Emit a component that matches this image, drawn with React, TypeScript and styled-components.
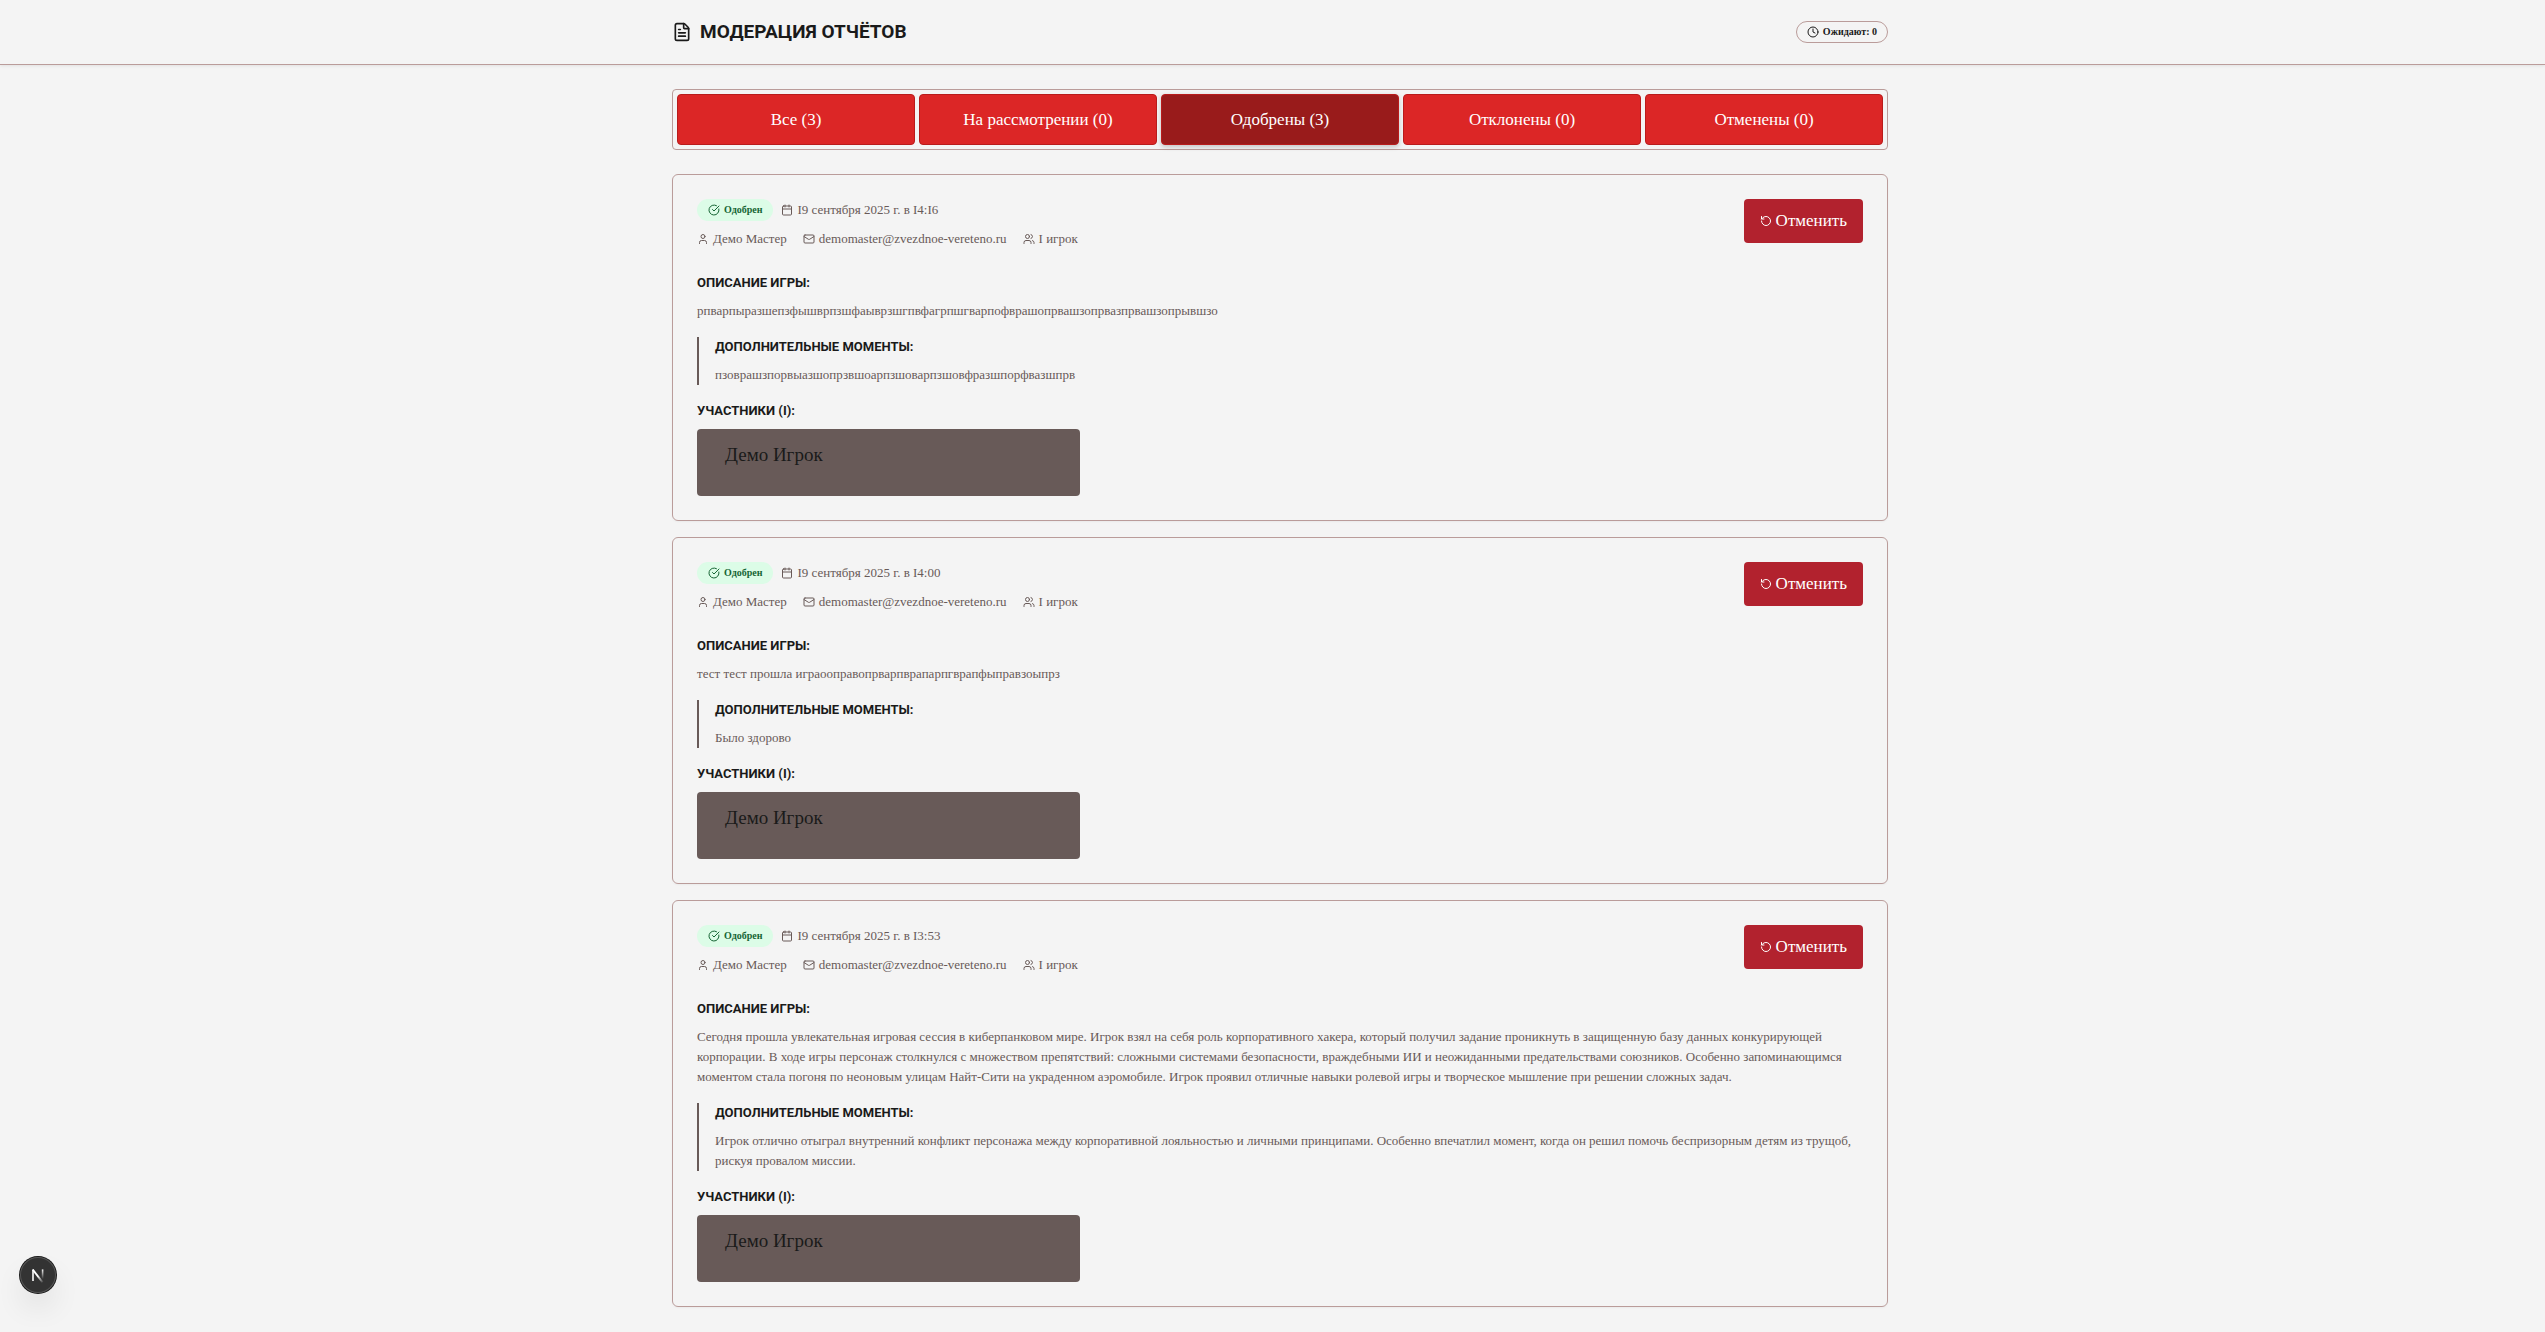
import React from "react";
import styled, { createGlobalStyle } from "styled-components";
import { Calendar, CircleCheckBig, Clock, FileText, Mail, RotateCcw, User, Users } from "lucide-react";

const color = {
  page: "#f4f4f4",
  ink: "#1a1a1a",
  muted: "#685a58",
  line: "#ba9c9a",
};

const bodyFont = `"Liberation Serif", "Times New Roman", serif`;
const displayFont = `Roboto, "Liberation Sans", sans-serif`;

const GlobalStyle = createGlobalStyle`
  *, *::before, *::after { box-sizing: border-box; }
  body {
    margin: 0;
    min-height: 100vh;
    background: ${color.page};
    color: ${color.ink};
    font-family: ${bodyFont};
    font-size: 13px;
    line-height: 20px;
  }
  h1, h2, h3, p, ul { margin: 0; padding: 0; }
  svg { flex: none; display: block; }
  button { font-family: inherit; cursor: pointer; }
`;

const Header = styled.header`
  padding-left: 15px;
  border-bottom: 1px solid ${color.line};
  box-shadow: 0 1px 3px rgba(0, 0, 0, 0.08);
`;

const Container = styled.div`
  max-width: 1280px;
  margin: 0 auto;
  padding: 0 32px;
`;

const HeaderRow = styled(Container)`
  display: flex;
  align-items: center;
  justify-content: space-between;
  height: 64px;
`;

const Title = styled.h1`
  display: flex;
  align-items: center;
  gap: 8px;
  font-family: ${displayFont};
  font-size: 19px;
  line-height: 32px;
  font-weight: 700;
`;

const Badge = styled.span<{ $tone: "outline" | "success" }>`
  display: inline-flex;
  align-items: center;
  gap: 4px;
  height: 22px;
  padding: 0 10px;
  border: 1px solid ${(p) => (p.$tone === "success" ? "transparent" : color.line)};
  border-radius: 11px;
  background: ${(p) => (p.$tone === "success" ? "#dcfce7" : "transparent")};
  color: ${(p) => (p.$tone === "success" ? "#166534" : color.ink)};
  font-size: 10px;
  line-height: 16px;
  font-weight: 700;
  white-space: nowrap;
`;

const Main = styled.main`
  padding: 24px 0 24px 15px;
`;

const Tabs = styled.div`
  display: grid;
  grid-template-columns: repeat(5, 1fr);
  gap: 4px;
  padding: 4px;
  margin-bottom: 24px;
  border: 1px solid ${color.line};
  border-radius: 4px;
`;

const Tab = styled.button<{ $active: boolean }>`
  padding: 12px 16px;
  border: 1px solid #b91c1c;
  border-radius: 4px;
  background: ${(p) => (p.$active ? "#991b1b" : "#dc2626")};
  box-shadow: ${(p) => (p.$active ? "0 2px 5px rgba(0, 0, 0, 0.2)" : "none")};
  color: #fff;
  font-size: 17px;
  line-height: 25px;
`;

const Reports = styled.div`
  display: flex;
  flex-direction: column;
  gap: 16px;
`;

const Card = styled.article`
  padding: 24px;
  border: 1px solid ${color.line};
  border-radius: 6px;
  box-shadow: 0 1px 2px rgba(0, 0, 0, 0.04);
`;

const CardHeader = styled.div`
  display: flex;
  align-items: flex-start;
  justify-content: space-between;
  margin-bottom: 24px;
`;

const MetaRows = styled.div`
  display: flex;
  flex-direction: column;
  gap: 8px;
  color: ${color.muted};
`;

const MetaRow = styled.div<{ $gap: number }>`
  display: flex;
  align-items: center;
  gap: ${(p) => p.$gap}px;
`;

const Meta = styled.span`
  display: flex;
  align-items: center;
  gap: 4px;
`;

const CancelButton = styled.button`
  display: flex;
  align-items: center;
  gap: 4px;
  height: 44px;
  padding: 0 16px;
  border: 0;
  border-radius: 4px;
  background: #b2222e;
  color: #fff;
  font-size: 17px;
  line-height: 28px;
`;

const Sections = styled.div`
  display: flex;
  flex-direction: column;
  gap: 16px;
`;

const Section = styled.section<{ $quoted?: boolean }>`
  display: flex;
  flex-direction: column;
  gap: 8px;
  padding-left: ${(p) => (p.$quoted ? 16 : 0)}px;
  border-left: ${(p) => (p.$quoted ? `2px solid ${color.muted}` : "0")};
`;

const SectionTitle = styled.h3`
  font-family: ${displayFont};
  font-size: 13px;
  line-height: 20px;
  font-weight: 700;
`;

const Text = styled.p`
  color: ${color.muted};
`;

const Players = styled.ul`
  display: grid;
  grid-template-columns: repeat(3, 1fr);
  gap: 8px;
  list-style: none;
`;

const Player = styled.li`
  padding: 12px 28px 27px;
  border-radius: 4px;
  background: ${color.muted};
  font-size: 19px;
  line-height: 28px;
`;

const DevButton = styled.button`
  position: fixed;
  left: 20px;
  bottom: 39px;
  width: 36px;
  height: 36px;
  padding: 0;
  border: 0;
  border-radius: 50%;
  background: #333;
  box-shadow: 0 0 0 1px #171717, inset 0 0 0 1px #555, 0 16px 32px -8px rgba(0, 0, 0, 0.24);
`;

const tabs = [
  { label: "Все (3)", active: false },
  { label: "На рассмотрении (0)", active: false },
  { label: "Одобрены (3)", active: true },
  { label: "Отклонены (0)", active: false },
  { label: "Отменены (0)", active: false },
];

const reports = [
  {
    date: "I9 сентября 2025 г. в I4:I6",
    description: "рпварпыразшепзфышврпзшфаыврзшгпвфагрпшгварпофврашопрвашзопрвазпрвашзопрывшзо",
    extra: "пзоврашзпорвыазшопрзвшоарпзшоварпзшовфразшпорфвазшпрв",
  },
  {
    date: "I9 сентября 2025 г. в I4:00",
    description: "тест тест прошла играооправопрварпврапарпгврапфыправзоыпрз",
    extra: "Было здорово",
  },
  {
    date: "I9 сентября 2025 г. в I3:53",
    description:
      "Сегодня прошла увлекательная игровая сессия в киберпанковом мире. Игрок взял на себя роль корпоративного хакера, который получил задание проникнуть в защищенную базу данных конкурирующей корпорации. В ходе игры персонаж столкнулся с множеством препятствий: сложными системами безопасности, враждебными ИИ и неожиданными предательствами союзников. Особенно запоминающимся моментом стала погоня по неоновым улицам Найт-Сити на украденном аэромобиле. Игрок проявил отличные навыки ролевой игры и творческое мышление при решении сложных задач.",
    extra:
      "Игрок отлично отыграл внутренний конфликт персонажа между корпоративной лояльностью и личными принципами. Особенно впечатлил момент, когда он решил помочь беспризорным детям из трущоб, рискуя провалом миссии.",
  },
];

function NextMark() {
  return (
    <svg width="36" height="36" viewBox="0 0 36 36" fill="none" aria-hidden="true">
      <defs>
        <linearGradient id="diag" x1="18" y1="19" x2="23" y2="26" gradientUnits="userSpaceOnUse">
          <stop stopColor="#fff" />
          <stop offset="1" stopColor="#fff" stopOpacity="0" />
        </linearGradient>
        <linearGradient id="stem" x1="22" y1="12" x2="22" y2="22" gradientUnits="userSpaceOnUse">
          <stop stopColor="#fff" />
          <stop offset="1" stopColor="#fff" stopOpacity="0" />
        </linearGradient>
      </defs>
      <path d="M13 24V12.5" stroke="#fff" strokeWidth="1.6" />
      <path d="M12.8 12.6L22.6 25.4" stroke="url(#diag)" strokeWidth="1.8" />
      <path d="M22.6 12.4V23" stroke="url(#stem)" strokeWidth="1.6" />
    </svg>
  );
}

export default function App() {
  return (
    <>
      <GlobalStyle />
      <Header>
        <HeaderRow>
          <Title>
            <FileText size={20} />
            МОДЕРАЦИЯ ОТЧЁТОВ
          </Title>
          <Badge $tone="outline">
            <Clock size={12} />
            Ожидают: 0
          </Badge>
        </HeaderRow>
      </Header>
      <Main>
        <Container>
          <Tabs role="tablist">
            {tabs.map((t) => (
              <Tab key={t.label} type="button" role="tab" aria-selected={t.active} $active={t.active}>
                {t.label}
              </Tab>
            ))}
          </Tabs>
          <Reports>
            {reports.map((r) => (
              <Card key={r.date}>
                <CardHeader>
                  <MetaRows>
                    <MetaRow $gap={8}>
                      <Badge $tone="success">
                        <CircleCheckBig size={12} />
                        Одобрен
                      </Badge>
                      <Meta>
                        <Calendar size={12} />
                        {r.date}
                      </Meta>
                    </MetaRow>
                    <MetaRow $gap={16}>
                      <Meta>
                        <User size={12} />
                        Демо Мастер
                      </Meta>
                      <Meta>
                        <Mail size={12} />
                        demomaster@zvezdnoe-vereteno.ru
                      </Meta>
                      <Meta>
                        <Users size={12} />I игрок
                      </Meta>
                    </MetaRow>
                  </MetaRows>
                  <CancelButton type="button">
                    <RotateCcw size={12} />
                    Отменить
                  </CancelButton>
                </CardHeader>
                <Sections>
                  <Section>
                    <SectionTitle>ОПИСАНИЕ ИГРЫ:</SectionTitle>
                    <Text>{r.description}</Text>
                  </Section>
                  <Section $quoted>
                    <SectionTitle>ДОПОЛНИТЕЛЬНЫЕ МОМЕНТЫ:</SectionTitle>
                    <Text>{r.extra}</Text>
                  </Section>
                  <Section>
                    <SectionTitle>УЧАСТНИКИ (I):</SectionTitle>
                    <Players>
                      <Player>Демо Игрок</Player>
                    </Players>
                  </Section>
                </Sections>
              </Card>
            ))}
          </Reports>
        </Container>
      </Main>
      <DevButton type="button" aria-label="Next.js">
        <NextMark />
      </DevButton>
    </>
  );
}
